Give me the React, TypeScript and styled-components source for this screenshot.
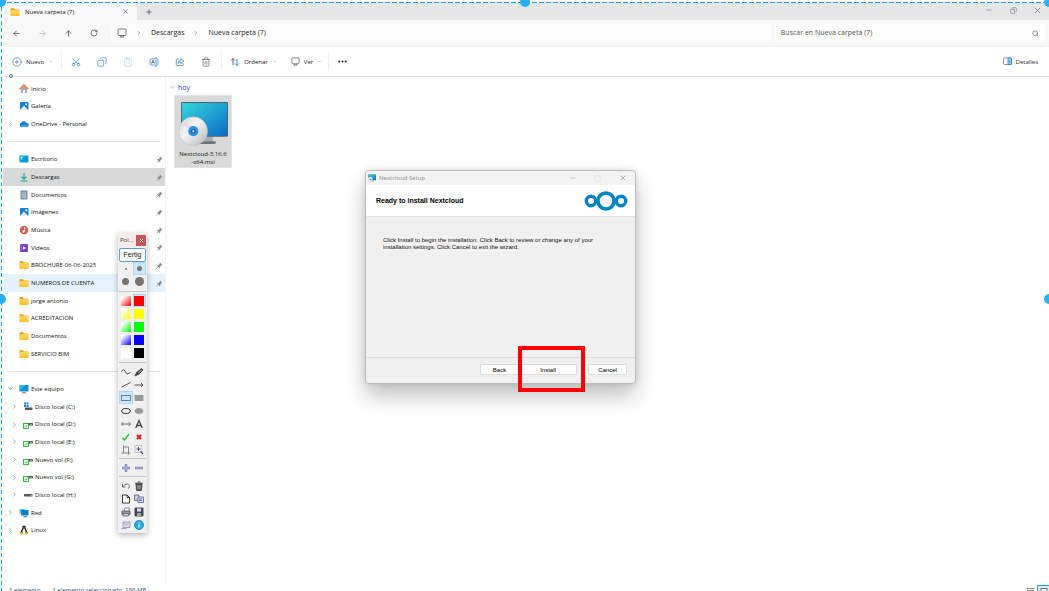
import React from "react";
import styled, { createGlobalStyle, css } from "styled-components";
import {
  ArrowLeft, ArrowRight, ArrowUp, RotateCw, ChevronRight, ChevronDown, X, Plus, Minus, Copy,
  Search, CirclePlus, Scissors, ClipboardList, Trash2, Ellipsis, Square,
} from "lucide-react";

const GlobalStyle = createGlobalStyle`
  * { box-sizing: border-box; }
  html, body { margin: 0; height: 100%; overflow: hidden; background: #fff; }
  #root { height: 100%; }
  body, button, input {
    font-family: "Open Sans", "Noto Sans", sans-serif;
    font-size: 6px;
    line-height: 10px;
    color: #111;
  }
  button { border: 0; padding: 0; background: none; }
  svg { display: block; flex: none; }
`;

const Screen = styled.div`
  position: relative;
  display: flex;
  flex-direction: column;
  height: 100vh;
  overflow: hidden;
  padding: 3px 0 0 3px;
  background: #fdfdfd;
`;

/* ---------- Title bar ---------- */
const TabBar = styled.header`
  display: flex;
  flex: none;
  height: 17px;
  background: #e6e6e6;
`;
const Tab = styled.div`
  display: flex;
  align-items: center;
  gap: 5px;
  width: 134px;
  padding: 0 7px;
  background: #f8f8f8;
  border-radius: 3px 3px 0 0;
`;
const TabTitle = styled.span`
  flex: 1;
  font-weight: 500;
`;
const IconButton = styled.button<{ $w?: number; $color?: string }>`
  display: flex;
  align-items: center;
  justify-content: center;
  width: ${(p) => p.$w ?? 26}px;
  color: ${(p) => p.$color ?? "#444"};
`;
const WindowControls = styled.div`
  display: flex;
  margin-left: auto;
`;
const MainWindowControls = styled(WindowControls)`
  padding-bottom: 3px;
`;

/* ---------- Address bar ---------- */
const AddressBar = styled.div`
  display: flex;
  flex: none;
  gap: 4px;
  height: 27px;
  padding: 4px 3px 4px 0;
  background: #f8f8f8;
  border-bottom: 1px solid #f1f1f1;
`;
const NavButtons = styled.nav`
  display: flex;
`;
const Breadcrumb = styled.div`
  display: flex;
  flex: 1;
  align-items: center;
  gap: 9px;
  padding-left: 6px;
  background: #fdfdfd;
  border-radius: 2px;
  color: #555;
`;
const Crumb = styled.a`
  font-size: 7px;
  color: #222;
  text-decoration: none;
`;
const SearchBox = styled.label`
  display: flex;
  align-items: center;
  width: 26%;
  padding: 0 7px 0 6px;
  background: #fdfdfd;
  border-radius: 2px;
  color: #555;
`;
const SearchInput = styled.input`
  flex: 1;
  min-width: 0;
  padding: 0;
  border: 0;
  outline: 0;
  background: none;
  font-size: 7px;
  &::placeholder { color: #555; opacity: 1; }
`;

/* ---------- Command bar ---------- */
const CommandBar = styled.div`
  display: flex;
  flex: none;
  align-items: center;
  height: 30px;
  padding: 0 11px 0 9px;
  background: #fff;
  border-bottom: 1px solid #dedede;
`;
const Command = styled.button<{ $end?: boolean }>`
  display: flex;
  align-items: center;
  gap: 4px;
  margin-right: 14px;
  color: #222;
  ${(p) => p.$end && css`margin: 0 0 0 auto;`}
`;
const ToolDivider = styled.i`
  width: 1px;
  height: 17px;
  margin-right: 8px;
  background: #eee;
`;
const CommandDividerFirst = styled(ToolDivider)`
  margin: 0 0 0 -6px;
`;
const CommandSection = styled.div`
  display: flex;
  align-items: center;
  margin-right: -8px;
`;
const CommandIcons = styled.div`
  display: flex;
  width: 159px;
  padding-left: 1px;
`;

/* ---------- Body ---------- */
const Body = styled.div`
  display: flex;
  flex: 1;
  min-height: 0;
`;
const Sidebar = styled.nav`
  display: flex;
  flex-direction: column;
  width: 163px;
  padding: 3px 0 46px;
  background: #fff;
  border-right: 1px solid #f3f3f3;
`;
const NavRow = styled.a<{ $depth: number; $state?: string }>`
  display: flex;
  flex: 1;
  align-items: center;
  min-height: 0;
  padding: 0 2px 0 ${(p) => (p.$depth ? 8 : 4)}px;
  color: #111;
  text-decoration: none;
  background: ${(p) => (p.$state === "selected" ? "#d9d9d9" : p.$state === "hover" ? "#e5f3ff" : "none")};
`;
const Twisty = styled.span`
  display: flex;
  width: 12px;
  color: #666;
`;
const NavLabel = styled.span`
  flex: 1;
  padding-left: 2px;
  white-space: nowrap;
`;
const NavDivider = styled.div`
  display: flex;
  flex: 1;
  align-items: center;
  padding: 0 5px 0 4px;
  &::after { content: ""; flex: 1; height: 1px; background: #e3e3e3; }
`;
const Content = styled.main`
  flex: 1;
  padding: 3px;
  background: #fff;
`;
const GroupHeader = styled.h2`
  display: flex;
  align-items: center;
  gap: 2px;
  height: 15px;
  margin: 0;
  font-size: 7px;
  font-weight: 400;
  color: #2c3f9e;
`;
const FileTile = styled.button`
  display: flex;
  flex-direction: column;
  align-items: center;
  width: 58px;
  height: 73px;
  margin: 0 0 0 5px;
  padding-top: 5px;
  background: #d9d9d9;
  border: 1px solid #e4e4e4;
  line-height: 8px;
`;
const FileName = styled.span`
  padding-top: 4px;
`;
const StatusBar = styled.footer`
  display: flex;
  flex: none;
  gap: 12px;
  height: 6px;
  padding: 0 0 0 6px;
  overflow: hidden;
  background: #fff;
  color: #35506e;
  line-height: 10px;
`;
const ViewModes = styled.div`
  display: flex;
  gap: 2px;
  margin-left: auto;
`;

/* ---------- Drawing tool palette ---------- */
const Palette = styled.aside`
  position: absolute;
  left: 118px;
  top: 233px;
  width: 29px;
  padding: 1px 1px 2px;
  background: #f0f0f0;
  box-shadow: 0 2px 6px rgba(0, 0, 0, 0.3);
`;
const PaletteTitle = styled.div`
  display: flex;
  align-items: center;
  justify-content: space-between;
  height: 12px;
  padding-left: 1px;
  background: #f7e9e9;
  color: #444;
`;
const PaletteClose = styled.button`
  display: flex;
  align-items: center;
  justify-content: center;
  width: 10px;
  height: 11px;
  background: #c9545a;
  color: #fff;
`;
const DoneButton = styled.button`
  width: 27px;
  height: 14px;
  margin-top: 2px;
  background: #fff;
  border: 1px solid #5d9fd6;
  border-radius: 2px;
  font-family: "Liberation Sans", sans-serif;
  font-size: 7px;
`;
const ToolGrid = styled.div`
  display: grid;
  grid-template-columns: 1fr 1fr;
  grid-auto-rows: 13px;
`;
const ToolSection = styled(ToolGrid)<{ $gap: number }>`
  margin-top: ${(p) => p.$gap}px;
  padding-top: 2px;
  border-top: 1px solid #c4c4c4;
`;
const Tool = styled.button<{ $on?: boolean }>`
  display: flex;
  align-items: center;
  justify-content: center;
  background: ${(p) => (p.$on ? "#cce6fb" : "none")};
  box-shadow: ${(p) => (p.$on ? "inset 0 0 0 1px #b0d6f5" : "none")};
`;
const Dot = styled.i<{ $d: number }>`
  width: ${(p) => p.$d}px;
  height: ${(p) => p.$d}px;
  border-radius: 50%;
  background: #77736d;
`;
const Swatch = styled.i<{ $c: string; $fade?: boolean }>`
  width: 10px;
  height: 10px;
  background: ${(p) => (p.$fade ? `linear-gradient(135deg, #fff 15%, ${p.$c})` : p.$c)};
`;

/* ---------- Installer dialog ---------- */
const Dialog = styled.section`
  position: absolute;
  left: 365px;
  top: 170px;
  display: flex;
  flex-direction: column;
  width: 271px;
  height: 214px;
  border: 1px solid #bdbdbd;
  border-radius: 4px;
  background: #f0f0f0;
  box-shadow: 0 12px 22px rgba(0, 0, 0, 0.24), 0 0 6px rgba(0, 0, 0, 0.12);
  font-family: "Liberation Sans", sans-serif;
`;
const DialogTitle = styled.div`
  display: flex;
  align-items: center;
  gap: 3px;
  height: 14px;
  padding-left: 2px;
  border-radius: 4px 4px 0 0;
  background: #f3f3f3;
  font-family: "Open Sans", sans-serif;
  color: #888;
`;
const DialogHeader = styled.div`
  display: flex;
  align-items: center;
  justify-content: space-between;
  height: 32px;
  padding: 0 7px 0 10px;
  background: #fff;
  border-bottom: 1px solid #e3e3e3;
`;
const DialogHeading = styled.h1`
  margin: 0;
  font-size: 7px;
  font-weight: 700;
  color: #000;
`;
const DialogText = styled.p`
  flex: 1;
  margin: 0;
  padding: 20px 40px 0 17px;
  line-height: 7px;
  white-space: nowrap;
`;
const DialogFooter = styled.div`
  display: flex;
  justify-content: flex-end;
  height: 26px;
  padding: 6px 8px 8px;
  border-top: 1px solid #dcdcdc;
`;
const DialogButton = styled.button<{ $w: number; $gap?: number }>`
  width: ${(p) => p.$w}px;
  margin-left: ${(p) => p.$gap ?? 0}px;
  background: #fdfdfd;
  border: 1px solid #dcdcdc;
  border-radius: 1px;
  font-family: inherit;
  color: #000;
`;
const Highlight = styled.div`
  position: absolute;
  left: 518px;
  top: 346px;
  width: 67px;
  height: 46px;
  border: 4px solid #fe0000;
`;

/* ---------- Capture selection frame ---------- */
const MarqueeTop = styled.div`
  position: absolute;
  left: 0;
  right: 0;
  top: 2px;
  height: 1px;
  background: repeating-linear-gradient(90deg, #15a4ec 0 5px, #fff 5px 7px);
`;
const MarqueeLeft = styled.div`
  position: absolute;
  left: 1px;
  top: 0;
  bottom: 0;
  width: 1px;
  background: repeating-linear-gradient(180deg, #15a4ec 0 4px, #fff 4px 7px);
`;
const Handle = styled.i<{ $x: string; $y: string }>`
  position: absolute;
  left: ${(p) => p.$x};
  top: ${(p) => p.$y};
  width: 10px;
  height: 10px;
  margin: -5px;
  border-radius: 50%;
  background: #29b0f2;
`;
const SmallHandle = styled.i`
  position: absolute;
  left: 9px;
  top: 74px;
  width: 4px;
  height: 4px;
  border: 1px solid #666;
  border-radius: 50%;
  background: #fff;
`;

/* ---------- Icons ---------- */
const Folder = () => (
  <svg width="10" height="10" viewBox="0 0 20 20">
    <path d="M1 4q0-2 2-2h4l3 3h7q2 0 2 2v3H1z" fill="#e8a317" />
    <rect x="1" y="6" width="18" height="12" rx="1.500" fill="#ffd258" />
    <path d="M1 13h18v3.500q0 1.500-1.500 1.500h-15Q1 18 1 16.500z" fill="#fac436" />
  </svg>
);
const Screenlet = ({ size }: { size: number }) => (
  <svg width={size} height={size} viewBox="0 0 20 20" fill="none" stroke="#555" strokeWidth="1.600">
    <rect x="2" y="2" width="16" height="13" rx="2" />
    <path d="M6 18h8M7.500 15v3M12.500 15v3" />
  </svg>
);
const drive = (badge: boolean) => (
  <svg width="10" height="10" viewBox="0 0 20 20">
    <rect x={badge ? 8 : 2} y="8" width={badge ? 12 : 17} height="5" rx="1.500" fill="#555" />
    <rect x="14" y="10" width="4" height="1.500" fill="#8be28b" />
    {badge && <rect x="1" y="9" width="10" height="10" fill="#e6ffe6" stroke="#2fae3a" strokeWidth="1.800" />}
    {badge && <path d="M3.500 14l2 2.500 3-4.500" fill="none" stroke="#2fae3a" strokeWidth="1.500" />}
  </svg>
);
const glyphs: Record<string, React.ReactNode> = {
  folder: <Folder />,
  home: (
    <svg width="10" height="10" viewBox="0 0 20 20">
      <path d="M4 9l6-6 6 6v9h-4v-6H8v6H4z" fill="#a3adb5" />
      <path d="M1 10.500L10 2l9 8.500" fill="none" stroke="#ee7b2d" strokeWidth="2.600" />
    </svg>
  ),
  image: (
    <svg width="10" height="10" viewBox="0 0 20 20">
      <rect x="2" y="2" width="17" height="16" rx="2" fill="#1683d8" />
      <path d="M2 18l8-9 8 9z" fill="#e8f6ff" />
      <circle cx="14.500" cy="6.500" r="2" fill="#fff" />
    </svg>
  ),
  cloud: (
    <svg width="10" height="10" viewBox="0 0 20 20">
      <path d="M5 16a4.500 4.500 0 0 1-.5-8.500A6 6 0 0 1 15 8a4 4 0 0 1 1 8z" fill="#1279d4" />
      <path d="M5 16q-3-.5-3.500-3L12 10l6 5q-1 1-2 1z" fill="#28a8ea" />
    </svg>
  ),
  desktop: (
    <svg width="10" height="10" viewBox="0 0 20 20">
      <rect x="1" y="3" width="18" height="14" rx="2" fill="#119bd4" />
      <path d="M1 13V5q0-2 2-2h9z" fill="#36c5d8" />
      <path d="M4 7h3M4 10h3" stroke="#fff" strokeWidth="1.400" />
    </svg>
  ),
  download: (
    <svg width="10" height="10" viewBox="0 0 20 20" fill="none" stroke="#18ab8b" strokeWidth="2.400">
      <path d="M10 2v12M5 9.500l5 5 5-5M3 18h14" />
    </svg>
  ),
  doc: (
    <svg width="10" height="10" viewBox="0 0 20 20">
      <rect x="3" y="1" width="14" height="18" rx="1.500" fill="#8296aa" />
      <path d="M6 6h3M6 10h8M6 14h8M11 6h3" stroke="#e8f0f7" strokeWidth="1.600" />
    </svg>
  ),
  music: (
    <svg width="10" height="10" viewBox="0 0 20 20">
      <circle cx="10" cy="10" r="8.500" fill="#d65b53" />
      <path d="M11 13V5l3 2" fill="none" stroke="#fff" strokeWidth="1.600" />
      <circle cx="9" cy="13" r="2.300" fill="#fff" />
    </svg>
  ),
  video: (
    <svg width="10" height="10" viewBox="0 0 20 20">
      <rect x="2" y="2" width="16" height="16" rx="2" fill="#7b3fd0" />
      <path d="M8 6.500v7l6-3.500z" fill="#fff" />
      <path d="M4.500 4v12" stroke="#c9a6f5" strokeWidth="1.500" strokeDasharray="2 2" />
    </svg>
  ),
  pc: (
    <svg width="10" height="10" viewBox="0 0 20 20">
      <rect x="1" y="2" width="18" height="13" rx="1" fill="#168ed0" />
      <path d="M1 14V3q0-1 1-1h11z" fill="#35b8e0" />
      <path d="M6 17.500h8" stroke="#5a7383" strokeWidth="2" />
    </svg>
  ),
  system: (
    <svg width="10" height="10" viewBox="0 0 20 20">
      <rect x="4" y="11" width="15" height="5" rx="1" fill="#4b5963" />
      <path d="M2 1h4v4H2zM7 1h4v4H7zM2 6h4v4H2zM7 6h4v4H7z" fill="#1584d8" />
    </svg>
  ),
  driveShared: drive(true),
  drive: drive(false),
  network: (
    <svg width="10" height="10" viewBox="0 0 20 20">
      <rect x="1" y="2" width="11" height="9" fill="#4ec3e8" />
      <rect x="4" y="4" width="15" height="11" rx="1" fill="#1a7fc0" />
      <path d="M9 17.500h7" stroke="#3b6d8c" strokeWidth="2" />
    </svg>
  ),
  linux: (
    <svg width="10" height="10" viewBox="0 0 20 20">
      <path d="M10 1c3 0 3.500 2.500 3.500 5 0 3 3.500 6 3.500 10H3c0-4 3.500-7 3.500-10C6.500 3.500 7 1 10 1z" fill="#222" />
      <path d="M10 7c2 2 3.500 5 3 10H7c-.5-5 1-8 3-10z" fill="#fff" />
      <path d="M1 16l5-2 3 5H4zM19 16l-5-2-3 5h5zM8 5h4l-2 3z" fill="#f0b020" />
    </svg>
  ),
};
const Pin = () => (
  <svg width="7" height="7" viewBox="0 0 14 14">
    <path d="M8 1l5 5-2 .5-2.500 2.500v2.500l-1 1L2 7l1-1h2.500L7.500 3z" fill="#868d93" />
    <path d="M4.500 9.500L1 13" stroke="#868d93" strokeWidth="1.400" />
  </svg>
);
const Rename = () => (
  <svg width="10" height="10" viewBox="0 0 20 20" fill="none" strokeWidth="1.500">
    <path d="M12 4H4Q2 4 2 6v8q0 2 2 2h8M16 4q2 0 2 2v8q0 2-2 2" stroke="#2b86d0" />
    <path d="M5 13l3-7 3 7M6 11h4" stroke="#555" />
    <path d="M14 2v16M12 2h4M12 18h4" stroke="#2b86d0" />
  </svg>
);
const Share = () => (
  <svg width="10" height="10" viewBox="0 0 20 20" fill="none" strokeWidth="1.500">
    <path d="M8 4H4Q2.500 4 2.500 5.500v10Q2.500 17 4 17h11q1.500 0 1.500-1.500V13" stroke="#5b7f9f" />
    <path d="M12 3l6 5-6 5v-3q-4 0-6 3 0-6 6-7z" stroke="#2b86d0" />
  </svg>
);
const SortIcon = () => (
  <svg width="10" height="10" viewBox="0 0 20 20" fill="none" strokeWidth="1.800">
    <path d="M6 16V3M2 7l4-4 4 4" stroke="#555" />
    <path d="M14 4v13M10 13l4 4 4-4" stroke="#2b86d0" />
  </svg>
);
const DetailsIcon = () => (
  <svg width="9" height="9" viewBox="0 0 18 18">
    <rect x="1" y="2" width="16" height="13" rx="2" fill="none" stroke="#666" strokeWidth="1.400" />
    <rect x="10" y="2" width="7" height="13" rx="1" fill="#a9d6f8" stroke="#1c7fd0" strokeWidth="1.600" />
    <path d="M13.500 6v6" stroke="#1c7fd0" strokeWidth="1.400" />
  </svg>
);
const Installer = ({ w, h }: { w: number; h: number }) => (
  <svg width={w} height={h} viewBox="0 0 48 44">
    <defs>
      <linearGradient id="screen" x1="0" y1="0" x2="1" y2="1">
        <stop offset="0" stopColor="#35d6dc" />
        <stop offset="1" stopColor="#0b6cc6" />
      </linearGradient>
      <linearGradient id="disc" x1="0" y1="0" x2="1" y2="1">
        <stop offset="0" stopColor="#cdd2d5" />
        <stop offset=".4" stopColor="#f4f4f4" />
        <stop offset="1" stopColor="#b5bbbe" />
      </linearGradient>
    </defs>
    <path d="M24 34h9v6h-9z" fill="#a5adb3" />
    <rect x="18" y="39.500" width="18" height="2.500" rx="1" fill="#6c757b" />
    <rect x="2" y="1" width="46" height="34" rx="1" fill="#4b6470" />
    <rect x="3" y="2" width="44" height="32" fill="url(#screen)" />
    <circle cx="14" cy="29.500" r="14" fill="url(#disc)" stroke="#b4babd" strokeWidth=".5" />
    <path d="M14 29L1.500 23a14 14 0 0 1 4-4.500z" fill="#eed8ee" />
    <circle cx="14" cy="29.500" r="5" fill="#2d8fdc" />
    <circle cx="14" cy="29.500" r="2.200" fill="#1263b0" />
    <circle cx="14" cy="29.500" r="1" fill="#e8f4fc" />
  </svg>
);
const NextcloudLogo = () => (
  <svg width="44" height="22" viewBox="0 0 44 22" fill="none" stroke="#0082c9">
    <circle cx="22" cy="11" r="8" strokeWidth="3.600" />
    <circle cx="7" cy="11" r="4.700" strokeWidth="3.400" />
    <circle cx="37" cy="11" r="4.700" strokeWidth="3.400" />
  </svg>
);

const T = ({ children }: { children: React.ReactNode }) => (
  <svg width="10" height="10" viewBox="0 0 20 20" fill="none" stroke="#444" strokeWidth="1.800">{children}</svg>
);
const drawTools: [string, React.ReactNode][] = [
  ["Freehand", <T><path d="M1 9q4-7 7-1t4 6 7-3" /></T>],
  ["Marker", <T><path d="M2 18l3-7L15 3l3 3-8 8z" fill="#444" /><path d="M9 12l6-6" stroke="#ddd" /></T>],
  ["Line", <T><path d="M1 14L19 5" /></T>],
  ["Arrow", <T><path d="M1 10h17M14 6l4 4-4 4" /></T>],
  ["Rectangle", <T><rect x="1" y="5" width="18" height="10" stroke="#4f7ba8" /></T>],
  ["Filled rectangle", <T><rect x="2" y="5" width="16" height="10" fill="#999" stroke="#999" /></T>],
  ["Ellipse", <T><ellipse cx="10" cy="10" rx="8.500" ry="5" stroke="#222" /></T>],
  ["Filled ellipse", <T><ellipse cx="10" cy="10" rx="8" ry="5" fill="#999" stroke="#999" /></T>],
  ["Double arrow", <T><path d="M1 10h18M5 6l-4 4 4 4M15 6l4 4-4 4" stroke="#667" /></T>],
  ["Text", <T><path d="M3.500 18L10 3l6.500 15M6 13h8" strokeWidth="2.600" /></T>],
  ["Tick", <T><path d="M3 12l4 4L16 4" stroke="#1fc01f" strokeWidth="2.600" /></T>],
  ["Cross", <T><path d="M6 6l8 8M14 6l-8 8" stroke="#e81c1c" strokeWidth="4" /></T>],
  ["Crop", <T><path d="M5 1v15h14M1 16h4M15 19V4H5" stroke="#666" strokeWidth="1.500" /></T>],
  ["Zoom", <T><rect x="2" y="1" width="14" height="14" stroke="#aab" strokeWidth="1.200" /><path d="M13 13l5 5" stroke="#448" strokeWidth="2.400" /><path d="M9 4v8M5 8h8" stroke="#448" /></T>],
];
const stepTools: [string, React.ReactNode][] = [
  ["Increase", <T><path d="M10 2v16M2 10h16" stroke="#7c80bb" strokeWidth="5" /><path d="M10 3v14M3 10h14" stroke="#bcc0e6" /></T>],
  ["Decrease", <T><path d="M2 10h16" stroke="#7c80bb" strokeWidth="5" /><path d="M3 10h14" stroke="#bcc0e6" /></T>],
];
const fileTools: [string, React.ReactNode][] = [
  ["Undo", <T><path d="M3 6v6h6M3 12q4-7 10-6t2 9" stroke="#446" strokeWidth="1.500" /></T>],
  ["Delete", <T><path d="M4 6h12l-1 13H5z" fill="#555" /><path d="M2 4.500h16M7 2h6" stroke="#333" /><path d="M8 8v8M12 8v8" stroke="#bbb" /></T>],
  ["New", <T><path d="M3 2h9l5 5v11H3z" fill="#fff" stroke="#222" /><path d="M12 2v5h5" stroke="#222" /></T>],
  ["Copy", <T><path d="M1 2h9v11H1z" fill="#ccd" stroke="#66a" /><path d="M8 6h11v11H8z" fill="#dde" stroke="#66a" /><path d="M10 10h6M10 13h6" stroke="#66a" /></T>],
  ["Print", <T><path d="M6 8l2-6h9l-2 6" fill="#fff" stroke="#778" /><path d="M2 8h16v7H2z" fill="#99a" stroke="#556" /><path d="M4 13h11v5H4z" fill="#ccd" stroke="#668" /></T>],
  ["Save", <T><path d="M2 2h16v16H2z" fill="#446" /><path d="M6 3h8v6H6z" fill="#dde" stroke="none" /><path d="M6 12h8v6H6z" fill="#9a9" stroke="none" /></T>],
  ["Send", <T><path d="M4 4h14v11H4z" fill="#dde" stroke="#99b" /><path d="M4 4l7 6 7-6M1 17h10" stroke="#99b" /></T>],
  ["Information", <T><circle cx="10" cy="10" r="9" fill="#25aee6" stroke="#1785bd" /><path d="M10 9v6M10 5v2" stroke="#fff" strokeWidth="2.400" /></T>],
];

type Row = { label: string; icon: string; depth?: number; open?: "closed" | "open"; pin?: boolean; state?: string };
const rows: (Row | null)[] = [
  { label: "Inicio", icon: "home" },
  { label: "Galería", icon: "image" },
  { label: "OneDrive - Personal", icon: "cloud", open: "closed" },
  null,
  { label: "Escritorio", icon: "desktop", pin: true },
  { label: "Descargas", icon: "download", pin: true, state: "selected" },
  { label: "Documentos", icon: "doc", pin: true },
  { label: "Imágenes", icon: "image", pin: true },
  { label: "Música", icon: "music", pin: true },
  { label: "Vídeos", icon: "video", pin: true },
  { label: "BROCHURE-06-06-2025", icon: "folder", pin: true },
  { label: "NUMEROS DE CUENTA", icon: "folder", pin: true, state: "hover" },
  { label: "jorge antonio", icon: "folder" },
  { label: "ACREDITACION", icon: "folder" },
  { label: "Documentos", icon: "folder" },
  { label: "SERVICIO BIM", icon: "folder" },
  null,
  { label: "Este equipo", icon: "pc", open: "open" },
  { label: "Disco local (C:)", icon: "system", depth: 1, open: "closed" },
  { label: "Disco local (D:)", icon: "driveShared", depth: 1, open: "closed" },
  { label: "Disco local (E:)", icon: "driveShared", depth: 1, open: "closed" },
  { label: "Nuevo vol (F:)", icon: "driveShared", depth: 1, open: "closed" },
  { label: "Nuevo vol (G:)", icon: "driveShared", depth: 1, open: "closed" },
  { label: "Disco local (H:)", icon: "drive", depth: 1, open: "closed" },
  { label: "Red", icon: "network", open: "closed" },
  { label: "Linux", icon: "linux", open: "closed" },
];
const colors = ["#ff0000", "#ffff00", "#00ff00", "#0000ff", "#000000"];

const tools = (list: [string, React.ReactNode][]) =>
  list.map(([name, icon]) => (
    <Tool key={name} aria-label={name} $on={name === "Rectangle"}>{icon}</Tool>
  ));

export default function App() {
  return (
    <>
      <GlobalStyle />
      <Screen>
        <TabBar>
          <Tab>
            <Folder />
            <TabTitle>Nueva carpeta (7)</TabTitle>
            <IconButton $w={10} aria-label="Cerrar pestaña"><X size={7} /></IconButton>
          </Tab>
          <IconButton $w={24} aria-label="Nueva pestaña"><Plus size={8} /></IconButton>
          <MainWindowControls>
            <IconButton $w={24} $color="#888" aria-label="Minimizar"><Minus size={8} /></IconButton>
            <IconButton $w={24} $color="#777" aria-label="Restaurar"><Copy size={7} transform="scale(-1 1)" /></IconButton>
            <IconButton $w={24} $color="#777" aria-label="Cerrar"><X size={9} /></IconButton>
          </MainWindowControls>
        </TabBar>

        <AddressBar>
          <NavButtons>
            <IconButton aria-label="Atrás"><ArrowLeft size={9} /></IconButton>
            <IconButton $color="#b5b5b5" aria-label="Adelante"><ArrowRight size={9} /></IconButton>
            <IconButton aria-label="Subir"><ArrowUp size={9} /></IconButton>
            <IconButton aria-label="Actualizar"><RotateCw size={8} /></IconButton>
          </NavButtons>
          <Breadcrumb>
            <Screenlet size={10} />
            <ChevronRight size={6} />
            <Crumb href="#descargas">Descargas</Crumb>
            <ChevronRight size={6} />
            <Crumb href="#nueva">Nueva carpeta (7)</Crumb>
          </Breadcrumb>
          <SearchBox>
            <SearchInput aria-label="Buscar" placeholder="Buscar en Nueva carpeta (7)" />
            <Search size={7} />
          </SearchBox>
        </AddressBar>

        <CommandBar>
          <Command><CirclePlus size={10} strokeWidth={1.5} color="#52718c" />Nuevo<ChevronDown size={5} color="#888" /></Command>
          <CommandDividerFirst />
          <CommandIcons>
            <IconButton $color="#2f7fbe" aria-label="Cortar"><Scissors size={10} strokeWidth={1.7} transform="rotate(-90)" /></IconButton>
            <IconButton $color="#3f87c0" aria-label="Copiar"><Copy size={10} strokeWidth={1.7} transform="scale(-1 1)" /></IconButton>
            <IconButton $color="#c5d5e2" aria-label="Pegar"><ClipboardList size={10} strokeWidth={1.7} /></IconButton>
            <IconButton aria-label="Cambiar nombre"><Rename /></IconButton>
            <IconButton aria-label="Compartir"><Share /></IconButton>
            <IconButton $color="#666" aria-label="Eliminar"><Trash2 size={10} strokeWidth={1.7} /></IconButton>
          </CommandIcons>
          <ToolDivider />
          <CommandSection>
            <Command><SortIcon />Ordenar<ChevronDown size={5} color="#888" /></Command>
            <Command><Screenlet size={9} />Ver<ChevronDown size={5} color="#888" /></Command>
          </CommandSection>
          <ToolDivider />
          <Command aria-label="Más"><Ellipsis size={11} strokeWidth={2.5} /></Command>
          <Command $end><DetailsIcon />Detalles</Command>
        </CommandBar>

        <Body>
          <Sidebar>
            {rows.map((r, i) =>
              r ? (
                <NavRow key={i} href="#item" $depth={r.depth ?? 0} $state={r.state}>
                  <Twisty>
                    {r.open === "closed" && <ChevronRight size={7} />}
                    {r.open === "open" && <ChevronDown size={7} color="#333" />}
                  </Twisty>
                  {glyphs[r.icon]}
                  <NavLabel>{r.label}</NavLabel>
                  {r.pin && <Pin />}
                </NavRow>
              ) : (
                <NavDivider key={i} />
              ),
            )}
          </Sidebar>
          <Content>
            <GroupHeader><ChevronDown size={7} color="#888" />hoy</GroupHeader>
            <FileTile>
              <Installer w={49} h={45} />
              <FileName>Nextcloud-3.16.6<br />-x64.msi</FileName>
            </FileTile>
          </Content>
        </Body>

        <StatusBar>
          <span>1 elemento</span>
          <span>1 elemento seleccionado&nbsp; 188 MB</span>
          <ViewModes>
            <svg width="8" height="6" viewBox="0 0 8 6"><path d="M0 3.500h7M0 5.500h7" stroke="#888" /></svg>
            <svg width="12" height="6" viewBox="0 0 12 6">
              <rect x=".5" y=".5" width="13" height="9" fill="#d8ecfa" stroke="#3d98dc" />
              <rect x="4" y="3.500" width="6" height="5" fill="#fff" stroke="#777" />
            </svg>
          </ViewModes>
        </StatusBar>

        <Dialog role="dialog" aria-label="Nextcloud Setup">
          <DialogTitle>
            <Installer w={8} h={8} />
            Nextcloud Setup
            <WindowControls>
              <IconButton $w={25} $color="#aaa" aria-label="Minimize"><Minus size={8} /></IconButton>
              <IconButton $w={25} $color="#ddd" aria-label="Maximize"><Square size={7} /></IconButton>
              <IconButton $w={25} $color="#888" aria-label="Close"><X size={8} /></IconButton>
            </WindowControls>
          </DialogTitle>
          <DialogHeader>
            <DialogHeading>Ready to install Nextcloud</DialogHeading>
            <NextcloudLogo />
          </DialogHeader>
          <DialogText>
            Click Install to begin the installation. Click Back to review or change any of your
            <br />
            installation settings. Click Cancel to exit the wizard.
          </DialogText>
          <DialogFooter>
            <DialogButton $w={39}>Back</DialogButton>
            <DialogButton $w={58}>Install</DialogButton>
            <DialogButton $w={39} $gap={11}>Cancel</DialogButton>
          </DialogFooter>
        </Dialog>
        <Highlight />

        <Palette>
          <PaletteTitle>Poi...<PaletteClose aria-label="Schließen"><X size={5} strokeWidth={4} /></PaletteClose></PaletteTitle>
          <DoneButton>Fertig</DoneButton>
          <ToolGrid>
            {[2, 5, 7, 9].map((d) => (
              <Tool key={d} aria-label={`Size ${d}`} $on={d === 5}><Dot $d={d} /></Tool>
            ))}
          </ToolGrid>
          <ToolSection $gap={3}>
            {colors.map((c) => (
              <React.Fragment key={c}>
                <Tool aria-label={`${c} light`}><Swatch $c={c === "#000000" ? "#ffffff" : c} $fade /></Tool>
                <Tool aria-label={c} $on={c === "#ff0000"}><Swatch $c={c} /></Tool>
              </React.Fragment>
            ))}
          </ToolSection>
          <ToolSection $gap={3}>{tools(drawTools)}</ToolSection>
          <ToolSection $gap={2}>{tools(stepTools)}</ToolSection>
          <ToolSection $gap={2}>{tools(fileTools)}</ToolSection>
        </Palette>

        <MarqueeTop />
        <MarqueeLeft />
        <SmallHandle />
        <Handle $x="1px" $y="2px" />
        <Handle $x="50%" $y="2px" />
        <Handle $x="100%" $y="2px" />
        <Handle $x="1px" $y="299px" />
        <Handle $x="100%" $y="299px" />
      </Screen>
    </>
  );
}
